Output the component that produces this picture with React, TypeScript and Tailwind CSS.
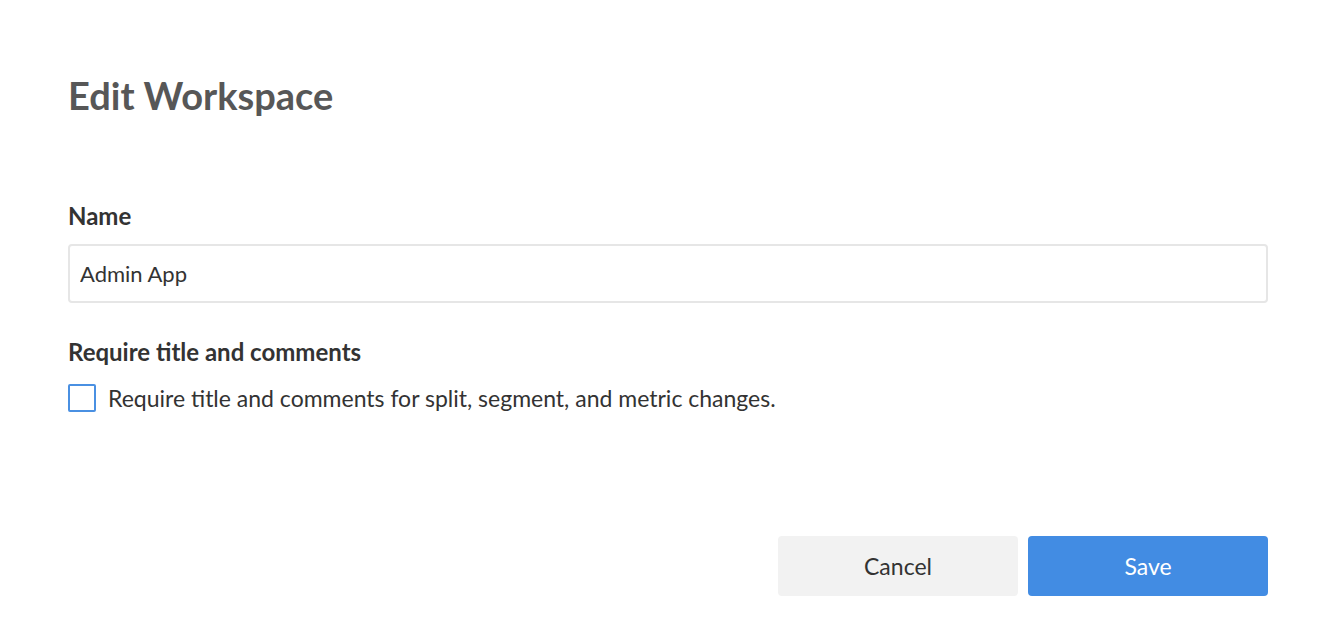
import { useState } from 'react';

export default function App() {
    const [name, setName] = useState('Admin App');
    const [requireTitle, setRequireTitle] = useState(false);

    return (
        <div className="min-h-screen bg-white pl-[68px] pr-[56px] pt-[70px]" style={{ fontFamily: 'Lato, "Noto Sans", sans-serif' }}>
            <h1 className="text-[38px] leading-[50px] font-bold text-[#575757]">Edit Workspace</h1>

            <div className="mt-[82px]">
                <label className="block text-[24px] leading-[28px] font-bold text-[#333333]">Name</label>
                <input
                    className="mt-[14px] w-full h-[59px] border-2 border-[#e6e6e6] rounded-[4px] px-[10px] text-[22px] text-[#333333] outline-none"
                    value={name}
                    onChange={(e) => setName(e.target.value)}
                />
            </div>

            <div className="mt-[35px]">
                <div className="text-[24px] leading-[28px] font-bold text-[#333333]">Require title and comments</div>
                <label className="mt-[18px] flex items-center gap-[12px] cursor-pointer">
                    <button
                        type="button"
                        onClick={() => setRequireTitle(!requireTitle)}
                        className="w-[28px] h-[28px] border-2 border-[#4a90e2] rounded-[2px] bg-white shrink-0"
                    />
                    <span className="text-[23px] leading-[28px] text-[#333333]">
                        Require title and comments for split, segment, and metric changes.
                    </span>
                </label>
            </div>

            <div className="mt-[124px] flex justify-end gap-[10px]">
                <button className="w-[240px] h-[60px] rounded-[4px] bg-[#f2f2f2] text-[23px] text-[#333333]">Cancel</button>
                <button className="w-[240px] h-[60px] rounded-[4px] bg-[#428ce3] text-[23px] text-white">Save</button>
            </div>
        </div>
    );
}
